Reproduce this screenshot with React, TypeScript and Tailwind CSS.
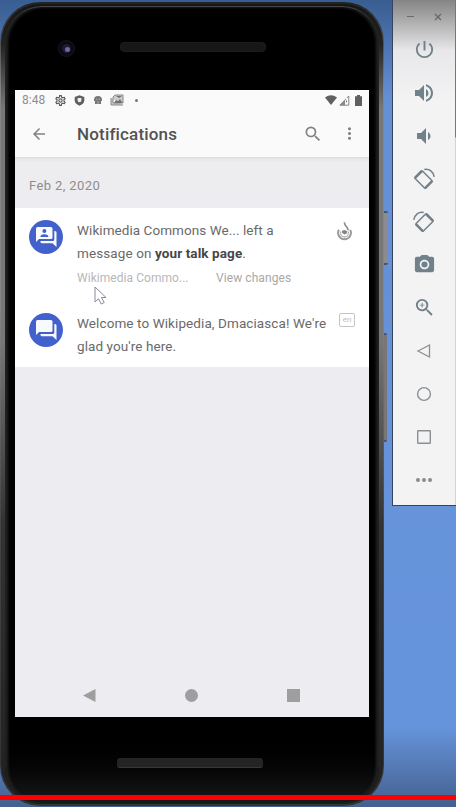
import type { ReactNode } from 'react';
import {
  MdArrowBack,
  MdMoreVert,
  MdOutlineSettings,
  MdPhotoCamera,
  MdPowerSettingsNew,
  MdSearch,
  MdVolumeDown,
  MdVolumeUp,
  MdZoomIn,
} from 'react-icons/md';

function StatusBar() {
  return (
    <div className="flex h-[20px] items-center pl-[7px] pr-[6px] text-[#6b6b6b]">
      <span className="w-[24px] whitespace-nowrap text-[12px] leading-none text-[#8f8f8f]">8:48</span>
      <MdOutlineSettings className="ml-[8px] size-[13px] text-[#555]" />
      <svg className="ml-[6.5px] size-[11px]" viewBox="0 0 11 11">
        <path d="M5.500 0.300 10.300 2v3.500c0 2.500-2.300 4.300-4.800 5.200-2.500-.9-4.800-2.700-4.800-5.200V2z" fill="#606060" />
        <path d="M3.600 3h3.800v2.300c0 1.200-.8 1.900-1.900 1.900s-1.900-.7-1.900-1.900z" fill="#eee" />
      </svg>
      <svg className="ml-[9.5px] size-[8px]" viewBox="0 0 8 8">
        <path d="M0 4a4 4 0 0 1 8 0v1H7v3H1V5H0z" fill="#777" />
        <path d="M2 3.200h1.300M4.700 3.200H6M4 5V8" stroke="#ccc" strokeWidth=".7" />
      </svg>
      <svg className="ml-[8px] h-[12px] w-[14px]" viewBox="0 0 14 12">
        <path d="M1 4v7h12M3 3l2-2h8v8H3z" fill="#ccc" stroke="#888" strokeWidth="1" />
        <path d="m4 9 2.200-3 2 1.300L10 5l2.500 4zM6 2l3 2 3-2z" fill="#707070" />
      </svg>
      <span className="ml-[11px] size-[3px] rounded-full bg-[#777]" />
      <div className="flex-1" />
      <svg className="h-[10px] w-[12px]" viewBox="0 0 12 10">
        <path d="M0 2.500Q6-2 12 2.500L6 10z" fill="#606060" />
      </svg>
      <svg className="ml-[2px] size-[11px]" viewBox="0 0 11 11">
        <path d="M.8 10.200 9.800 1v9.200z" fill="none" stroke="#888" />
        <path d="M1 10.300 6 5v5.300z" fill="#888" />
        <path d="M7.800 3v4.500" stroke="#fafafa" strokeWidth="1.500" />
        <path d="M7.500 5.500v1.800" stroke="#777" />
      </svg>
      <svg className="ml-[5px] h-[11px] w-[7px]" viewBox="0 0 7 11">
        <path d="M2 0h3v1.200h2V11H0V1.200h2z" fill="#606060" />
      </svg>
      <span className="w-px" />
    </div>
  );
}

function AppBar() {
  return (
    <header className="flex h-[48px] items-center border-b border-[#dedede] text-[#828282]">
      <MdArrowBack className="ml-[15px] size-[18px]" />
      <h1 className="ml-[29px] mt-px whitespace-nowrap text-[17px] font-medium leading-none tracking-[0.170px] text-[#525252]">
        Notifications
      </h1>
      <div className="flex-1" />
      <MdSearch className="mr-[17px] size-[20px]" />
      <MdMoreVert className="mr-[10px] size-[19px]" />
    </header>
  );
}

function MessageBadge({ person = false }: { person?: boolean }) {
  return (
    <div className="mt-px flex size-[34px] shrink-0 items-center justify-center rounded-full bg-[#4361cc]">
      <svg className="size-[22px]" viewBox="0 0 22 22">
        <path d="M1 2.500Q1 1 2.500 1H16q1.500 0 1.500 1.500v9q0 1.500-1.500 1.500H4l-3 3z" fill="#f8faff" />
        <path d="M19.300 5H20q1.500 0 1.500 1.500V21L17.500 17.300H7q-1.500 0-1.500-1.500V15h12.300q1.500 0 1.500-1.500z" fill="#f8faff" />
        {person && (
          <g fill="#4361cc">
            <circle cx="9.400" cy="5" r="2" />
            <path d="M5.400 11q0-2.700 4-2.700t4 2.700z" />
          </g>
        )}
      </svg>
    </div>
  );
}

function Notice({ icon, mark, children }: { icon: ReactNode; mark: ReactNode; children: ReactNode }) {
  return (
    <div className="flex items-start">
      {icon}
      <div className="ml-[14px] w-[258px] shrink-0 whitespace-nowrap text-[13.500px] leading-[23px] text-[#6a6a6a]">{children}</div>
      {mark}
    </div>
  );
}

function Screen() {
  return (
    <div className="flex h-[627px] w-[354px] flex-col bg-[#ededf1]">
      <div className="bg-[#fafafa]">
        <StatusBar />
        <AppBar />
      </div>
      <div className="flex h-[50px] items-center bg-gradient-to-b from-[#e5e5e6] via-[#ededef] via-10% to-[#ededf1] pl-[14px] pt-[5px] text-[13px] tracking-[0.400px] text-[#8d8d8d]">
        Feb 2, 2020
      </div>
      <div className="h-[159px] bg-white pl-[14px] pt-[11px]">
        <div className="h-[93px]">
          <Notice
            icon={<MessageBadge person />}
            mark={
              <svg className="ml-px mt-[2px] h-[20px] w-[17px]" viewBox="0 0 17 20" fill="none">
                <path d="M2.900 8.700A6.400 6.400 0 1 0 14.200 8.900" stroke="#9a9a9a" strokeWidth="2" />
                <path d="M11.800 9.200C13 6.500 8.200 5.400 8.400 1.200" stroke="#8e8e8e" strokeWidth="1.600" />
                <path d="M4.800 10.500a4 4 0 1 0 7.400 0" stroke="#b5b5b5" strokeWidth="1.300" />
                <path d="m5.800 9.700 3-.8 2.500 1.300-.6 2.300-2.200 1-2.200-1.500z" fill="#858585" />
              </svg>
            }
          >
            <p className="tracking-[0.060px]">Wikimedia Commons We... left a</p>
            <p className="tracking-[0.100px]">
              message on <b className="font-bold text-[#474747]">your talk page</b>.
            </p>
            <div className="mt-[2px] flex text-[12px] text-[#a8a8a8]">
              <span className="w-[139px] tracking-[0.050px] text-[#b7b7b7]">Wikimedia Commo...</span>
              <span className="tracking-[0.080px]">View changes</span>
            </div>
          </Notice>
        </div>
        <Notice
          icon={<MessageBadge />}
          mark={
            <div className="ml-[4px] mt-px flex h-[14px] w-[16px] items-center justify-center rounded-[2px] border border-[#c4c4c4] text-[8px] leading-none text-[#bebebe]">
              en
            </div>
          }
        >
          <p className="tracking-[0.090px]">Welcome to Wikipedia, Dmaciasca! We're</p>
          <p className="tracking-[0.090px]">glad you're here.</p>
        </Notice>
      </div>
      <div className="flex-1" />
      <div className="flex h-[43px] items-center justify-between pl-[67.500px] pr-[69px]">
        <svg className="size-[13px]" viewBox="0 0 13 13">
          <path d="M0 6.500 12.500 0v13z" fill="#9e9e9e" />
        </svg>
        <span className="size-[13px] rounded-full bg-[#9e9ea0]" />
        <span className="size-[13px] bg-[#9e9e9e]" />
      </div>
    </div>
  );
}

function Phone() {
  return (
    <div className="mt-[2px] h-[804px] w-[384px] shrink-0 rounded-[40px] bg-[linear-gradient(to_bottom,#222_0,#858585_11%,#858585_38%,#444_65%,#333)] px-[1px] pt-[1.500px] pb-[2px]">
      <div className="h-full rounded-[39px] bg-[linear-gradient(to_bottom,#161616_0,#222_5%,#777_13%,#777_42%,#333_65%,#202020)] px-[4px] pt-[2px]">
        <div className="flex h-full flex-col rounded-[37px] border-t border-[#444] bg-gradient-to-b from-black from-90% to-[#1a1a1a] pl-[10px] shadow-[inset_3px_0_3px_#222,inset_-3px_0_3px_#222]">
          <div className="flex h-[83.500px] items-start pl-[43px] pt-[33px]">
            <div className="flex size-[17px] items-center justify-center rounded-full border border-[#17171b] bg-[#0b0914]">
              <div className="size-[9px] rounded-full bg-[#211831] p-[3px]">
                <div className="size-[5px] rounded-full bg-[#70679a]" />
              </div>
            </div>
            <div className="ml-[45px] mt-[2px] h-[10px] w-[146px] rounded-[4px] border border-[#1d1d1d] bg-[#171717]" />
          </div>
          <Screen />
          <div className="ml-[102px] mt-[41px] h-[10px] w-[146px] rounded-[3px] border-b border-[#383838] bg-[#242424]" />
        </div>
      </div>
    </div>
  );
}

function RotateIcon({ right = false }: { right?: boolean }) {
  return (
    <svg className={right ? 'size-[24px] -scale-x-100' : 'size-[24px]'} viewBox="0 0 24 24" fill="none" stroke="#70818a">
      <rect x="6.300" y="4.800" width="10.400" height="15.400" rx="1" transform="rotate(-45 11.500 12.500)" strokeWidth="1.500" />
      <path d="m3.100 11 6.900-6.900M13.100 21l6.900-6.900" strokeWidth="2.200" />
      <path d="M12.300 2.500c5.200-1 9 2.300 9.900 7.300" strokeWidth="1.500" />
    </svg>
  );
}

const controls: { name: string; icon: ReactNode }[] = [
  { name: 'power', icon: <MdPowerSettingsNew className="size-[23px]" /> },
  { name: 'volume up', icon: <MdVolumeUp className="size-[24px]" /> },
  { name: 'volume down', icon: <MdVolumeDown className="size-[24px]" /> },
  { name: 'rotate left', icon: <RotateIcon /> },
  { name: 'rotate right', icon: <RotateIcon right /> },
  { name: 'camera', icon: <MdPhotoCamera className="size-[23px]" /> },
  { name: 'zoom', icon: <MdZoomIn className="size-[23px]" /> },
  {
    name: 'back',
    icon: (
      <svg className="size-[16px]" viewBox="0 0 16 16" fill="none" stroke="#8b9093" strokeWidth="1.300">
        <path d="M2 8 13.500 2v12z" />
      </svg>
    ),
  },
  {
    name: 'home',
    icon: (
      <svg className="size-[16px]" viewBox="0 0 16 16" fill="none" stroke="#8b9093" strokeWidth="1.400">
        <circle cx="8" cy="8" r="6.400" />
      </svg>
    ),
  },
  {
    name: 'overview',
    icon: (
      <svg className="size-[16px]" viewBox="0 0 16 16" fill="none" stroke="#8b9093" strokeWidth="1.400">
        <rect x="1.700" y="1.700" width="12.600" height="12.600" rx=".5" />
      </svg>
    ),
  },
  {
    name: 'more',
    icon: (
      <span className="flex gap-[2px]">
        <i className="size-[4px] rounded-full bg-[#868d91]" />
        <i className="size-[4px] rounded-full bg-[#868d91]" />
        <i className="size-[4px] rounded-full bg-[#868d91]" />
      </span>
    ),
  },
];

function SideButtons() {
  return (
    <div className="flex w-[8px] shrink-0 flex-col pt-[211px]">
      <div className="h-[54px] w-[4px] rounded-r-[2px] border-y-2 border-[#4d5361] bg-[#8b8b90]" />
      <div className="mt-[68px] h-[109px] w-[3px] rounded-r-[2px] border-y-2 border-[#4d5361] bg-[#777]" />
    </div>
  );
}

function Toolbar() {
  return (
    <aside className="flex h-[506px] w-[64px] shrink-0 border-b border-l border-[#36445c] bg-gradient-to-b from-[#858585] via-[#e8e8ea] via-10% to-[#f3f3f4] to-20% text-[#70818a]">
      <div className="w-[62px]">
        <div className="flex h-[28px] items-center pl-[14px] pt-[5px]">
          <span className="h-px w-[7px] bg-[#6a6a6a]" />
          <svg className="ml-[20px] size-[8px]" viewBox="0 0 8 8">
            <path d="m1 1 6 6m0-6L1 7" stroke="#666" strokeWidth="1.300" />
          </svg>
        </div>
        <div className="flex flex-col">
          {controls.map((c) => (
            <button key={c.name} aria-label={c.name} className="flex h-[43px] w-[62px] items-center justify-center">
              {c.icon}
            </button>
          ))}
        </div>
      </div>
      <div className="w-px bg-[linear-gradient(to_bottom,#777_137px,#d4d4d6_138px)]" />
    </aside>
  );
}

export default function App() {
  return (
    <div className="relative h-[807px] w-[456px] overflow-hidden bg-gradient-to-b from-[#385d91] via-[#658fd3] via-12% to-[#6694dc] to-80% font-['Roboto',sans-serif]">
      <div className="h-full bg-gradient-to-b from-transparent from-90% to-[#44608e]">
        <div className="flex items-start">
          <Phone />
          <SideButtons />
          <Toolbar />
        </div>
      </div>
      <svg className="absolute left-[94px] top-[286px] h-[19px] w-[13px]" viewBox="0 0 13 19">
        <path d="M1 1v15l3.500-3.300 2.700 5.300 3-1.500-2.700-5H12z" fill="#fff" stroke="#8a8a9c" strokeWidth="1" />
      </svg>
      <div className="absolute inset-x-0 top-[795px] h-[5px] bg-[#fe0000]" />
    </div>
  );
}
